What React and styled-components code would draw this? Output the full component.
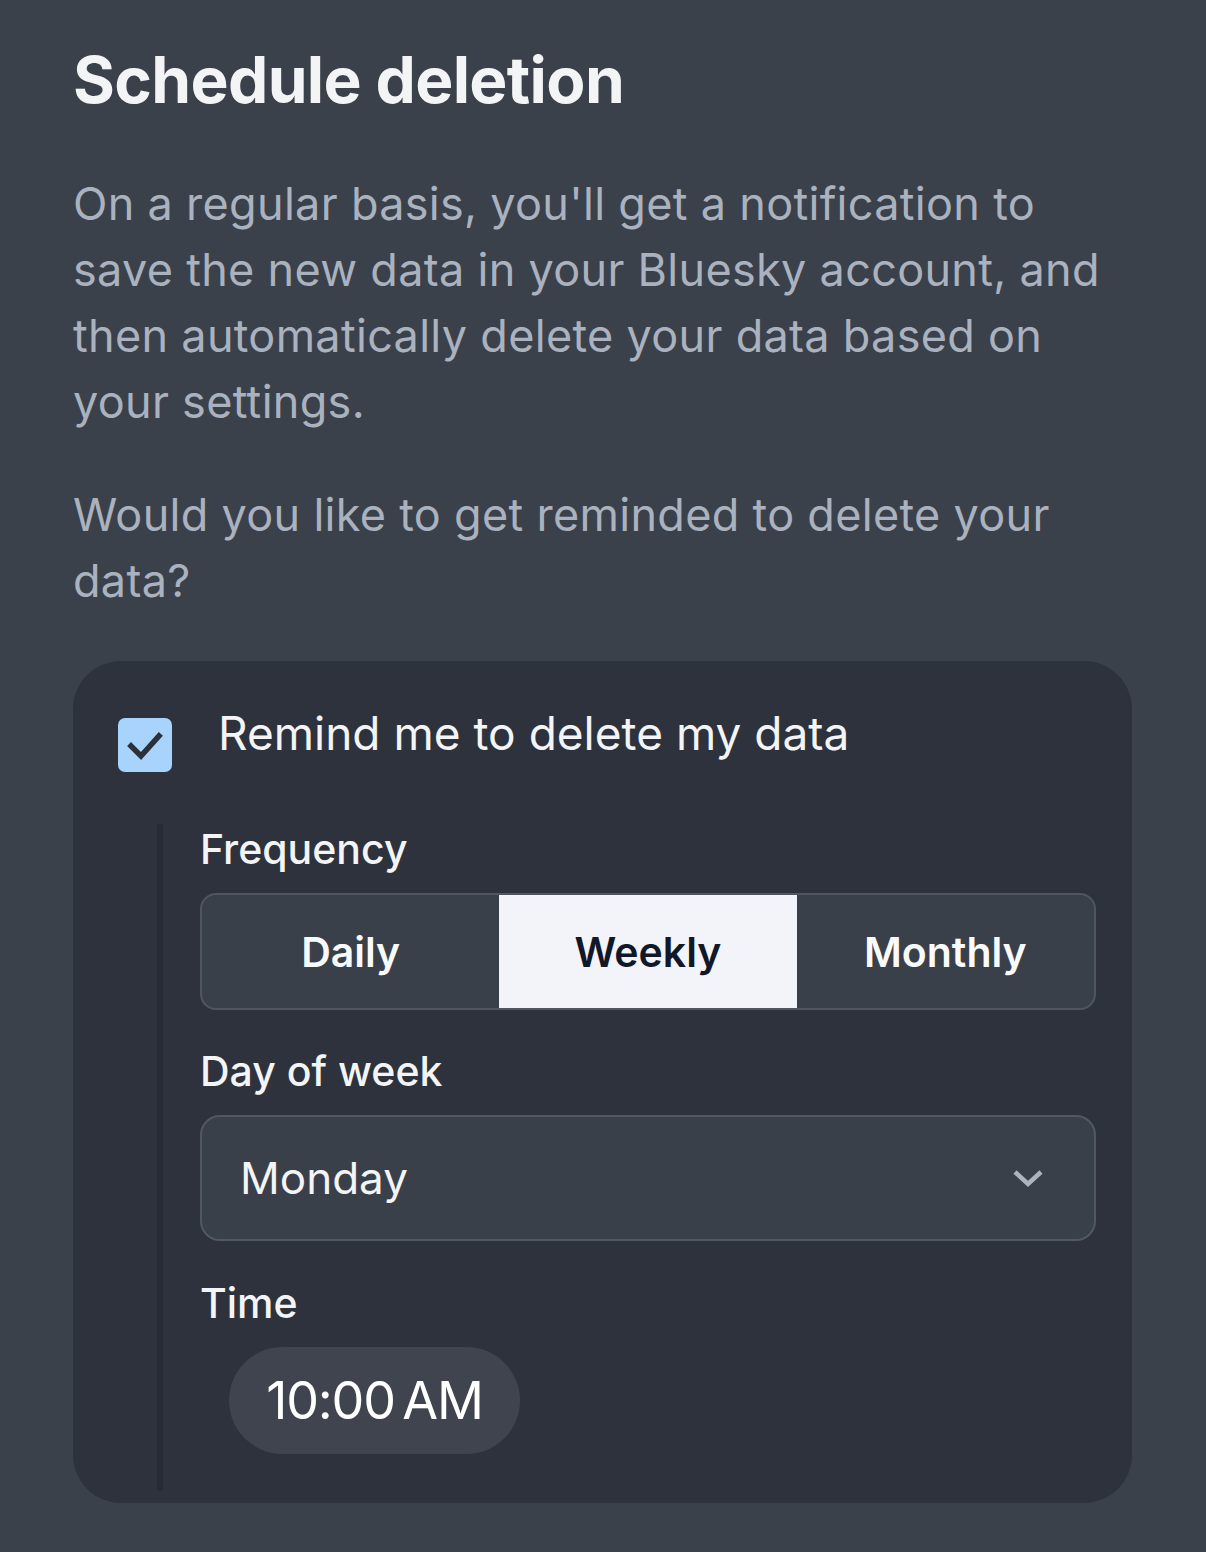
import React from "react";
import styled, { createGlobalStyle } from "styled-components";

const Global = createGlobalStyle`
  html, body { margin: 0; padding: 0; background: #3b414b; }
  body { font-family: Inter, "Noto Sans", sans-serif; -webkit-font-smoothing: antialiased; }
  * { box-sizing: border-box; }
`;

const Page = styled.main`
  min-height: 1552px;
  background: #3b414b;
  padding: 48px 74px 0 73px;
`;

const Title = styled.h1`
  margin: 0;
  font-size: 64px;
  line-height: 1;
  font-weight: 700;
  letter-spacing: -0.65px;
  color: #f3f4f6;
`;

const Para = styled.p`
  margin: ${p => p.$top}px 0 0;
  font-size: 45px;
  line-height: 66px;
  font-weight: 400;
  letter-spacing: 0.3px;
  color: #aab2bf;
`;

const Card = styled.section`
  margin-top: 47px;
  background: #2d323c;
  border-radius: 48px;
  padding: 43px 36px 12px 45px;
`;

const CheckRow = styled.label`
  display: flex;
  align-items: flex-start;
  gap: 46px;
`;

const Box = styled.span`
  flex: none;
  margin-top: 14px;
  width: 54px;
  height: 54px;
  border-radius: 7px;
  background: #a7d3fd;
  display: flex;
  align-items: center;
  justify-content: center;
`;

const CheckText = styled.span`
  font-size: 46px;
  line-height: 58px;
  color: #f3f4f6;
`;

const Nested = styled.div`
  margin: 52px 0 0 39px;
  border-left: 6px solid #262b34;
  padding: 0 0 37px 37px;
  display: flex;
  flex-direction: column;
`;

const Label = styled.div`
  margin-top: ${p => p.$top}px;
  font-size: 41px;
  line-height: 50px;
  font-weight: 500;
  color: #f3f4f6;
`;

const Segmented = styled.div`
  margin-top: 19px;
  display: grid;
  grid-template-columns: repeat(3, 1fr);
  height: 117px;
  border: 2px solid #505661;
  border-radius: 16px;
  background: #3a404a;
  overflow: hidden;
`;

const Segment = styled.button`
  border: none;
  margin: 0;
  padding: 0;
  font-family: inherit;
  font-size: 41px;
  font-weight: 600;
  background: ${p => (p.$active ? "#f3f4f9" : "transparent")};
  color: ${p => (p.$active ? "#111827" : "#f9fafb")};
`;

const Select = styled.div`
  margin-top: 19px;
  height: 126px;
  border: 2px solid #525862;
  border-radius: 20px;
  background: #3a404a;
  display: flex;
  align-items: center;
  justify-content: space-between;
  padding: 0 50px 0 38px;
  font-size: 44px;
  color: #f3f4f6;
`;

const Pill = styled.div`
  margin: 19px 0 0 29px;
  align-self: flex-start;
  width: 291px;
  height: 107px;
  border-radius: 54px;
  background: #3f444e;
  display: flex;
  align-items: center;
  justify-content: center;
  font-size: 52px;
  color: #ffffff;
  letter-spacing: -1.2px;
  word-spacing: -6px;
`;

export default function App() {
  return (
    <>
      <Global />
      <Page>
        <Title>Schedule deletion</Title>
        <Para $top={59}>
          On a regular basis, you'll get a notification to save the new data in your Bluesky account, and then
          automatically delete your data based on your settings.
        </Para>
        <Para $top={47}>Would you like to get reminded to delete your data?</Para>
        <Card>
          <CheckRow>
            <Box>
              <svg width="40" height="40" viewBox="0 0 40 40" fill="none">
                <path d="M6 21 L16 31 L34 11" stroke="#2b303a" strokeWidth="5.5" strokeLinecap="square" />
              </svg>
            </Box>
            <CheckText>Remind me to delete my data</CheckText>
          </CheckRow>
          <Nested>
            <Label $top={0}>Frequency</Label>
            <Segmented>
              <Segment>Daily</Segment>
              <Segment $active>Weekly</Segment>
              <Segment>Monthly</Segment>
            </Segmented>
            <Label $top={36}>Day of week</Label>
            <Select>
              <span>Monday</span>
              <svg width="32" height="20" viewBox="0 0 32 20" fill="none">
                <path d="M3 4 L16 16 L29 4" stroke="#aeb4bf" strokeWidth="4.5" />
              </svg>
            </Select>
            <Label $top={37}>Time</Label>
            <Pill>10:00 AM</Pill>
          </Nested>
        </Card>
      </Page>
    </>
  );
}
